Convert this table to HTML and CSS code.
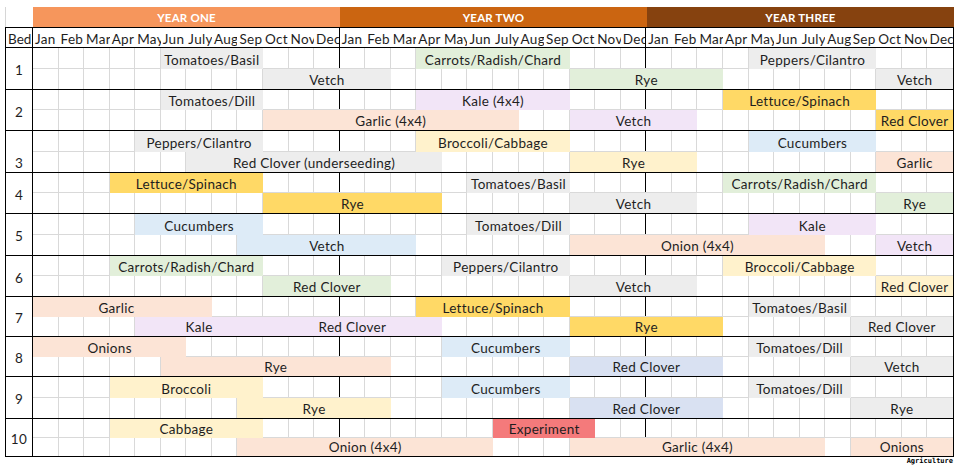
FILE: index.html
```html
<!DOCTYPE html>
<html lang="en">
<head>
<meta charset="utf-8">
<title>Crop Rotation Plan</title>
<link rel="stylesheet" href="styles.css">
</head>
<body>
<div class="sheet">
  <div class="years">
    <div class="corner"></div>
    <div class="year y1">YEAR ONE</div>
    <div class="year y2">YEAR TWO</div>
    <div class="year y3">YEAR THREE</div>
  </div>

  <div class="table">
    <div class="bed-h">Bed</div>
    <div class="m">Jan</div><div class="m">Feb</div><div class="m">Mar</div><div class="m">Apr</div><div class="m">May</div><div class="m">Jun</div><div class="m">July</div><div class="m">Aug</div><div class="m">Sep</div><div class="m">Oct</div><div class="m">Nov</div><div class="m ye">Dec</div>
    <div class="m">Jan</div><div class="m">Feb</div><div class="m">Mar</div><div class="m">Apr</div><div class="m">May</div><div class="m">Jun</div><div class="m">July</div><div class="m">Aug</div><div class="m">Sep</div><div class="m">Oct</div><div class="m">Nov</div><div class="m ye">Dec</div>
    <div class="m">Jan</div><div class="m">Feb</div><div class="m">Mar</div><div class="m">Apr</div><div class="m">May</div><div class="m">Jun</div><div class="m">July</div><div class="m">Aug</div><div class="m">Sep</div><div class="m">Oct</div><div class="m">Nov</div><div class="m">Dec</div>
    <div class="hline head-line"></div>

    <div class="vlines">
      <span></span><span></span><span></span><span></span><span></span><span></span><span></span><span></span><span></span><span></span><span></span><span></span>
      <span></span><span></span><span></span><span></span><span></span><span></span><span></span><span></span><span></span><span></span><span></span><span></span>
      <span></span><span></span><span></span><span></span><span></span><span></span><span></span><span></span><span></span><span></span><span></span><span></span>
    </div>

    <!-- mid gridlines of each bed -->
    <div class="mid" style="grid-row:3"></div>
    <div class="mid" style="grid-row:6"></div>
    <div class="mid" style="grid-row:9"></div>
    <div class="mid" style="grid-row:12"></div>
    <div class="mid" style="grid-row:15"></div>
    <div class="mid" style="grid-row:18"></div>
    <div class="mid" style="grid-row:21"></div>
    <div class="mid" style="grid-row:24"></div>
    <div class="mid" style="grid-row:27"></div>
    <div class="mid" style="grid-row:30"></div>

    <!-- bed numbers -->
    <div class="num" style="grid-row:3 / 5">1</div>
    <div class="num" style="grid-row:6 / 8">2</div>
    <div class="num low" style="grid-row:9 / 11">3</div>
    <div class="num" style="grid-row:12 / 14">4</div>
    <div class="num" style="grid-row:15 / 17">5</div>
    <div class="num" style="grid-row:18 / 20">6</div>
    <div class="num" style="grid-row:21 / 23">7</div>
    <div class="num" style="grid-row:24 / 26">8</div>
    <div class="num" style="grid-row:27 / 29">9</div>
    <div class="num" style="grid-row:30 / 32">10</div>

    <!-- bed separators -->
    <div class="hline" style="grid-row:5"></div>
    <div class="hline" style="grid-row:8"></div>
    <div class="hline" style="grid-row:11"></div>
    <div class="hline" style="grid-row:14"></div>
    <div class="hline" style="grid-row:17"></div>
    <div class="hline" style="grid-row:20"></div>
    <div class="hline" style="grid-row:23"></div>
    <div class="hline" style="grid-row:26"></div>
    <div class="hline" style="grid-row:29"></div>

    <!-- Bed 1 -->
    <div class="bar gy" style="grid-row:3;grid-column:7 / 11">Tomatoes/Basil</div>
    <div class="bar gy" style="grid-row:4;grid-column:11 / 16">Vetch</div>
    <div class="bar gr" style="grid-row:3;grid-column:17 / 23">Carrots/Radish/Chard</div>
    <div class="bar gr" style="grid-row:4;grid-column:23 / 29">Rye</div>
    <div class="bar gy" style="grid-row:3;grid-column:30 / 35">Peppers/Cilantro</div>
    <div class="bar gy" style="grid-row:4;grid-column:35 / 38">Vetch</div>

    <!-- Bed 2 -->
    <div class="bar gy" style="grid-row:6;grid-column:7 / 11">Tomatoes/Dill</div>
    <div class="bar pc" style="grid-row:7;grid-column:11 / 21">Garlic (4x4)</div>
    <div class="bar lv" style="grid-row:6;grid-column:17 / 23">Kale (4x4)</div>
    <div class="bar lv" style="grid-row:7;grid-column:23 / 28">Vetch</div>
    <div class="bar gd" style="grid-row:6;grid-column:29 / 35">Lettuce/Spinach</div>
    <div class="bar gd" style="grid-row:7;grid-column:35 / 38">Red Clover</div>

    <!-- Bed 3 -->
    <div class="bar gy" style="grid-row:9;grid-column:6 / 11">Peppers/Cilantro</div>
    <div class="bar gy" style="grid-row:10;grid-column:8 / 18">Red Clover (underseeding)</div>
    <div class="bar ly" style="grid-row:9;grid-column:17 / 23">Broccoli/Cabbage</div>
    <div class="bar ly" style="grid-row:10;grid-column:23 / 28">Rye</div>
    <div class="bar bl" style="grid-row:9;grid-column:30 / 35">Cucumbers</div>
    <div class="bar pc" style="grid-row:10;grid-column:35 / 38">Garlic</div>

    <!-- Bed 4 -->
    <div class="bar gd" style="grid-row:12;grid-column:5 / 11">Lettuce/Spinach</div>
    <div class="bar gd" style="grid-row:13;grid-column:11 / 18">Rye</div>
    <div class="bar gy" style="grid-row:12;grid-column:19 / 23">Tomatoes/Basil</div>
    <div class="bar gy" style="grid-row:13;grid-column:23 / 28">Vetch</div>
    <div class="bar gr" style="grid-row:12;grid-column:29 / 35">Carrots/Radish/Chard</div>
    <div class="bar gr" style="grid-row:13;grid-column:35 / 38">Rye</div>

    <!-- Bed 5 -->
    <div class="bar bl" style="grid-row:15;grid-column:6 / 11">Cucumbers</div>
    <div class="bar bl" style="grid-row:16;grid-column:10 / 17">Vetch</div>
    <div class="bar gy" style="grid-row:15;grid-column:19 / 23">Tomatoes/Dill</div>
    <div class="bar pc" style="grid-row:16;grid-column:23 / 33">Onion (4x4)</div>
    <div class="bar lv" style="grid-row:15;grid-column:30 / 35">Kale</div>
    <div class="bar lv" style="grid-row:16;grid-column:35 / 38">Vetch</div>

    <!-- Bed 6 -->
    <div class="bar gr" style="grid-row:18;grid-column:5 / 11">Carrots/Radish/Chard</div>
    <div class="bar gr" style="grid-row:19;grid-column:11 / 16">Red Clover</div>
    <div class="bar gy" style="grid-row:18;grid-column:18 / 23">Peppers/Cilantro</div>
    <div class="bar gy" style="grid-row:19;grid-column:23 / 28">Vetch</div>
    <div class="bar ly" style="grid-row:18;grid-column:29 / 35">Broccoli/Cabbage</div>
    <div class="bar ly" style="grid-row:19;grid-column:35 / 38">Red Clover</div>

    <!-- Bed 7 -->
    <div class="bar pc shift" style="grid-row:21;grid-column:2 / 9">Garlic</div>
    <div class="bar lv" style="grid-row:22;grid-column:6 / 11">Kale</div>
    <div class="bar lv" style="grid-row:22;grid-column:11 / 18">Red Clover</div>
    <div class="bar gd" style="grid-row:21;grid-column:17 / 23">Lettuce/Spinach</div>
    <div class="bar gd" style="grid-row:22;grid-column:23 / 29">Rye</div>
    <div class="bar gy" style="grid-row:21;grid-column:30 / 34">Tomatoes/Basil</div>
    <div class="bar gy" style="grid-row:22;grid-column:34 / 38">Red Clover</div>

    <!-- Bed 8 -->
    <div class="bar pc" style="grid-row:24;grid-column:2 / 8">Onions</div>
    <div class="bar pc" style="grid-row:25;grid-column:7 / 16">Rye</div>
    <div class="bar bl" style="grid-row:24;grid-column:18 / 23">Cucumbers</div>
    <div class="bar bv" style="grid-row:25;grid-column:23 / 29">Red Clover</div>
    <div class="bar gy" style="grid-row:24;grid-column:30 / 34">Tomatoes/Dill</div>
    <div class="bar gy" style="grid-row:25;grid-column:34 / 38">Vetch</div>

    <!-- Bed 9 -->
    <div class="bar ly" style="grid-row:27;grid-column:5 / 11">Broccoli</div>
    <div class="bar ly" style="grid-row:28;grid-column:10 / 16">Rye</div>
    <div class="bar bl" style="grid-row:27;grid-column:18 / 23">Cucumbers</div>
    <div class="bar bv" style="grid-row:28;grid-column:23 / 29">Red Clover</div>
    <div class="bar gy" style="grid-row:27;grid-column:30 / 34">Tomatoes/Dill</div>
    <div class="bar gy" style="grid-row:28;grid-column:34 / 38">Rye</div>

    <!-- Bed 10 -->
    <div class="bar ly" style="grid-row:30;grid-column:5 / 11">Cabbage</div>
    <div class="bar pc" style="grid-row:31;grid-column:10 / 20">Onion (4x4)</div>
    <div class="bar rd" style="grid-row:30;grid-column:20 / 24">Experiment</div>
    <div class="bar pc" style="grid-row:31;grid-column:23 / 33">Garlic (4x4)</div>
    <div class="bar pc" style="grid-row:31;grid-column:34 / 38">Onions</div>
  </div>

  <div class="mark">Agriculture</div>
</div>
</body>
</html>
```

FILE: styles.css
```css
* {
  box-sizing: border-box;
}

html,
body {
  margin: 0;
  background: #fff;
}

body {
  font-family: Lato, "Open Sans", "Liberation Sans", sans-serif;
  color: #1e1e1e;
}

.sheet {
  width: 949px;
  margin: 7px 0 0 5px;
}

/* Year band */
.years {
  display: grid;
  grid-template-columns: 28px repeat(3, 1fr);
  height: 20px;
}

.corner {
  border-left: 1px solid #d6d6d6;
}

.year {
  display: flex;
  align-items: center;
  justify-content: center;
  color: #fff;
  font-weight: 700;
  font-size: 11.5px;
  letter-spacing: 0.2px;
}

.y1 { background: #f6965c; }
.y2 { background: #cb6511; }
.y3 { background: #86420f; }

/* Main grid */
.table {
  display: grid;
  border: 1px solid #000;
  grid-template-columns: 27px repeat(36, minmax(0, 1fr));
  grid-template-rows:
    19px 1px
    21px 20px 1px
    20px 20px 1px
    21px 20px 1px
    20px 20px 1px
    21px 20px 1px
    20px 20px 1px
    20px 19px 1px
    20px 19px 1px
    21px 20px 1px
    19px 18px;
  font-size: 13.5px;
  letter-spacing: 0.3px;
  line-height: 16px;
}

.bed-h {
  grid-row: 1;
  grid-column: 1;
  border-right: 1px solid #000;
  padding-left: 2px;
  letter-spacing: 0;
  display: flex;
  align-items: flex-end;
}

.m {
  grid-row: 1;
  display: flex;
  align-items: flex-end;
  padding-left: 2px;
  white-space: nowrap;
  overflow: hidden;
}

.m.ye {
  border-right: 1px solid #000;
}

.hline {
  grid-column: 1 / -1;
  background: #000;
}

.head-line {
  grid-row: 2;
}

/* light gridlines */
.vlines {
  grid-column: 2 / -1;
  grid-row: 3 / -1;
  display: grid;
  grid-template-columns: repeat(36, 1fr);
}

.vlines span {
  border-right: 1px solid #d9d9d9;
}

.vlines span:nth-child(12n) {
  border-right-color: #000;
}

.vlines span:last-child {
  border-right: 0;
}

.mid {
  grid-column: 2 / -1;
  align-self: end;
  height: 1px;
  background: #d9d9d9;
}

/* bed numbers */
.num {
  grid-column: 1;
  border-right: 1px solid #000;
  display: flex;
  align-items: center;
  justify-content: center;
  padding-top: 3px;
  background: #fff;
}

.num.low {
  align-items: flex-end;
  padding-top: 0;
  padding-bottom: 1px;
}

/* crop bars */
.bar {
  display: flex;
  align-items: flex-end;
  justify-content: center;
  white-space: nowrap;
  overflow: hidden;
  padding-bottom: 1px;
}

.bar.shift {
  padding-right: 12px;
}

.gy { background: #ededed; }
.gr { background: #e2efda; }
.pc { background: #fce4d6; }
.lv { background: #f2e5f7; }
.gd { background: #ffd966; }
.ly { background: #fff2cc; }
.bl { background: #ddebf7; }
.bv { background: #d9e1f2; }
.rd { background: #f47a7b; }

.mark {
  text-align: right;
  font-family: "DejaVu Sans Mono", monospace;
  font-weight: 700;
  font-size: 7px;
  line-height: 8px;
  padding-right: 1px;
  color: #000;
}
```
